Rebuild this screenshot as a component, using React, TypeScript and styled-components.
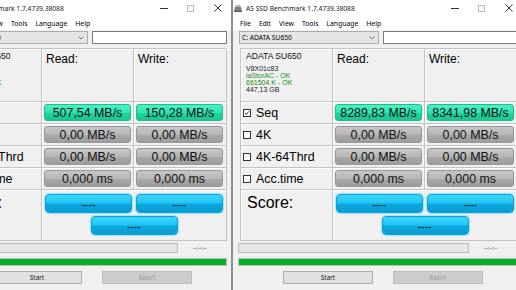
import React from 'react';
import styled, { createGlobalStyle } from 'styled-components';

const GlobalStyle = createGlobalStyle`
  html, body {
    margin: 0;
    padding: 0;
    background: #f0f0f0;
    overflow: hidden;
  }
  body {
    font-family: "Noto Sans", "Liberation Sans", sans-serif;
    color: #000;
  }
`;

const Desktop = styled.div`
  display: flex;
  width: 516px;
  height: 290px;
  overflow: hidden;
`;

const Window = styled.div<{ $shift?: number }>`
  flex: 0 0 291px;
  width: 291px;
  height: 290px;
  margin-left: ${(p) => p.$shift ?? 0}px;
  box-sizing: border-box;
  border-left: 1px solid #8e8e8e;
  border-right: 1px solid #8e8e8e;
  background: #f0f0f0;
  display: flex;
  flex-direction: column;
`;

const TitleBar = styled.div`
  height: 16px;
  background: #fff;
  display: flex;
  align-items: center;
  font-size: 6.7px;
  color: #222;
`;

const TitleIcon = styled.svg`
  width: 8px;
  height: 7px;
  margin: 0 4px 0 1px;
`;

const TitleText = styled.span`
  flex: 1;
  white-space: nowrap;
`;

const Control = styled.div`
  width: 27px;
  height: 16px;
  display: flex;
  align-items: center;
  justify-content: center;
`;

const MenuBar = styled.div`
  height: 14px;
  background: #fff;
  display: flex;
  align-items: center;
  padding-left: 3px;
  font-size: 6.8px;
`;

const MenuItem = styled.span`
  padding: 0 4px;
`;

const ComboRow = styled.div`
  display: flex;
  margin: 1px 0 0 6px;
  height: 13px;
`;

const Combo = styled.div`
  width: 140px;
  box-sizing: border-box;
  border: 1px solid #adadad;
  background: #e5e5e5;
  display: flex;
  align-items: center;
  justify-content: space-between;
  padding: 0 3px 0 2px;
  font-size: 6.7px;
`;

const TextBox = styled.div`
  width: 135px;
  margin-left: 4px;
  box-sizing: border-box;
  border: 1px solid #7a7a7a;
  background: #fff;
`;

const Panel = styled.div`
  margin: 4px 0 0 7px;
  display: grid;
  grid-template-columns: 92px 92px 93px;
  grid-template-rows: 53px 22px 22px 22px 22px 51px;
  width: 277px;
  box-sizing: border-box;
  border-top: 1px solid #c3c3c3;
  border-left: 1px solid #c3c3c3;
`;

const Cell = styled.div<{ $span?: number }>`
  box-sizing: border-box;
  border-right: 1px solid #c3c3c3;
  border-bottom: 1px solid #c3c3c3;
  box-shadow: inset 1px 1px 0 #fdfdfd;
  grid-column: span ${(p) => p.$span ?? 1};
  display: flex;
  align-items: center;
  padding: 0 2px;
`;

const InfoCell = styled(Cell)`
  flex-direction: column;
  align-items: flex-start;
  justify-content: flex-start;
  padding: 2px 0 0 5px;
`;

const DriveName = styled.div`
  font-family: "Liberation Sans", Arial, sans-serif;
  font-size: 8.6px;
  line-height: 11px;
  margin-bottom: 3px;
  color: #111;
`;

const InfoLine = styled.div<{ $ok?: boolean }>`
  font-family: "Liberation Sans", Arial, sans-serif;
  font-size: 7px;
  line-height: 7px;
  color: ${(p) => (p.$ok ? '#1d8a1d' : '#222')};
`;

const HeadCell = styled(Cell)`
  align-items: flex-start;
  padding: 3px 0 0 4px;
  font-family: "Liberation Sans", Arial, sans-serif;
  font-size: 12px;
`;

const LabelCell = styled(Cell)`
  padding-left: 2px;
  font-family: "Liberation Sans", Arial, sans-serif;
  font-size: 12.4px;
  gap: 5px;
`;

const Check = styled.span`
  width: 6px;
  height: 6px;
  border: 1px solid #333;
  background: #fff;
  display: inline-flex;
  align-items: center;
  justify-content: center;
`;

const ResultButton = styled.div<{ $tone: 'green' | 'gray' }>`
  width: 87px;
  height: 17px;
  box-sizing: border-box;
  border-radius: 3px;
  display: flex;
  align-items: center;
  justify-content: center;
  font-family: "Liberation Sans", Arial, sans-serif;
  font-size: 12.4px;
  color: #111;
  border: 1px solid ${(p) => (p.$tone === 'green' ? '#1cbd8e' : '#979797')};
  background: ${(p) =>
    p.$tone === 'green'
      ? 'linear-gradient(to bottom, #4cf0c4 0%, #2fe4b2 50%, #1dd49f 55%, #17c793 100%)'
      : 'linear-gradient(to bottom, #c6c6c6 0%, #b6b6b6 50%, #a8a8a8 55%, #9d9d9d 100%)'};
`;

const ScoreLabel = styled(Cell)`
  align-items: flex-start;
  padding: 4px 0 0 6px;
  font-family: "Liberation Sans", Arial, sans-serif;
  font-size: 16px;
`;

const ScoreCell = styled(Cell)`
  display: grid;
  grid-template-columns: 87px 87px;
  column-gap: 4px;
  row-gap: 3px;
  align-content: start;
  padding: 4px 0 0 3px;
`;

const ScoreButton = styled.div<{ $wide?: boolean }>`
  width: 87px;
  height: 19px;
  box-sizing: border-box;
  border-radius: 4px;
  border: 1px solid #0b9fd6;
  box-shadow: 0 0 1px 1px #9fe6ff;
  background: linear-gradient(to bottom, #3fd6fc 0%, #1ec6f6 48%, #0ca8de 52%, #0a9dd3 100%);
  display: flex;
  align-items: center;
  justify-content: center;
  padding-top: 3px;
  font-family: "Liberation Sans", Arial, sans-serif;
  font-size: 9px;
  font-weight: bold;
  color: #1f2d36;
  letter-spacing: 0.4px;
  ${(p) => (p.$wide ? 'grid-column: 1 / span 2; justify-self: center;' : '')}
`;

const ProgressRow = styled.div`
  display: flex;
  align-items: center;
  margin: 2px 0 0 5px;
  height: 10px;
`;

const Progress = styled.div`
  width: 231px;
  height: 10px;
  box-sizing: border-box;
  border: 1px solid #bcbcbc;
  background: #e6e6e6;
`;

const Eta = styled.span`
  margin-left: 15px;
  font-size: 6px;
  color: #444;
  letter-spacing: -0.2px;
`;

const GreenBar = styled.div`
  margin: 5px 0 0 5px;
  width: 280px;
  height: 8px;
  background: #06b025;
  border: 1px solid #bcbcbc;
  box-sizing: border-box;
`;

const ActionRow = styled.div`
  display: flex;
  gap: 20px;
  margin: 5px 0 0 50px;
`;

const ActionButton = styled.div<{ $disabled?: boolean }>`
  width: 90px;
  height: 13px;
  box-sizing: border-box;
  border: 1px solid ${(p) => (p.$disabled ? '#bfbfbf' : '#adadad')};
  background: ${(p) => (p.$disabled ? '#cccccc' : '#e1e1e1')};
  color: ${(p) => (p.$disabled ? '#9a9a9a' : '#111')};
  display: flex;
  align-items: center;
  justify-content: center;
  font-size: 6.4px;
`;

const rows = [
  { label: 'Seq', checked: true },
  { label: '4K', checked: false },
  { label: '4K-64Thrd', checked: false },
  { label: 'Acc.time', checked: false },
];

type Result = { read: string; write: string };

const WinControls = () => (
  <>
    <Control>
      <svg width="8" height="1">
        <rect width="8" height="1" fill="#333" />
      </svg>
    </Control>
    <Control>
      <svg width="7" height="7">
        <rect x="0.5" y="0.5" width="6" height="6" fill="none" stroke="#bbb" />
      </svg>
    </Control>
    <Control>
      <svg width="8" height="8">
        <path d="M0.5 0.5 L7.5 7.5 M7.5 0.5 L0.5 7.5" stroke="#222" strokeWidth="0.9" />
      </svg>
    </Control>
  </>
);

const Bench = ({ shift, results }: { shift?: number; results: Result[] }) => (
  <Window $shift={shift}>
    <TitleBar>
      <TitleIcon viewBox="0 0 8 7">
        <path d="M1 2 L7 2 L8 6 L0 6 Z" fill="#7d7d7d" />
        <path d="M2 0 L6 0 L7 2 L1 2 Z" fill="#b5b5b5" />
        <rect x="0" y="6" width="8" height="1" fill="#555" />
      </TitleIcon>
      <TitleText>AS SSD Benchmark 1.7.4739.38088</TitleText>
      <WinControls />
    </TitleBar>
    <MenuBar>
      {['File', 'Edit', 'View', 'Tools', 'Language', 'Help'].map((m) => (
        <MenuItem key={m}>{m}</MenuItem>
      ))}
    </MenuBar>
    <ComboRow>
      <Combo>
        <span>C: ADATA SU650</span>
        <svg width="6" height="4">
          <path d="M0.5 0.5 L3 3 L5.5 0.5" fill="none" stroke="#555" strokeWidth="0.8" />
        </svg>
      </Combo>
      <TextBox />
    </ComboRow>
    <Panel>
      <InfoCell>
        <DriveName>ADATA SU650</DriveName>
        <InfoLine>V8X01c83</InfoLine>
        <InfoLine $ok>iaStorAC - OK</InfoLine>
        <InfoLine $ok>661504 K - OK</InfoLine>
        <InfoLine>447,13 GB</InfoLine>
      </InfoCell>
      <HeadCell>Read:</HeadCell>
      <HeadCell>Write:</HeadCell>
      {rows.map((r, i) => (
        <React.Fragment key={r.label}>
          <LabelCell>
            <Check>
              {r.checked && (
                <svg width="6" height="6">
                  <path d="M1 3 L2.5 4.5 L5 1.2" fill="none" stroke="#222" strokeWidth="0.9" />
                </svg>
              )}
            </Check>
            {r.label}
          </LabelCell>
          <Cell>
            <ResultButton $tone={i === 0 ? 'green' : 'gray'}>{results[i].read}</ResultButton>
          </Cell>
          <Cell>
            <ResultButton $tone={i === 0 ? 'green' : 'gray'}>{results[i].write}</ResultButton>
          </Cell>
        </React.Fragment>
      ))}
      <ScoreLabel>Score:</ScoreLabel>
      <ScoreCell $span={2}>
        <ScoreButton>----</ScoreButton>
        <ScoreButton>----</ScoreButton>
        <ScoreButton $wide>----</ScoreButton>
      </ScoreCell>
    </Panel>
    <ProgressRow>
      <Progress />
      <Eta>--:--:--</Eta>
    </ProgressRow>
    <GreenBar />
    <ActionRow>
      <ActionButton>Start</ActionButton>
      <ActionButton $disabled>Abort</ActionButton>
    </ActionRow>
  </Window>
);

const empty = [
  { read: '0,00 MB/s', write: '0,00 MB/s' },
  { read: '0,00 MB/s', write: '0,00 MB/s' },
  { read: '0,000 ms', write: '0,000 ms' },
];

export default function App() {
  return (
    <>
      <GlobalStyle />
      <Desktop>
        <Bench shift={-59} results={[{ read: '507,54 MB/s', write: '150,28 MB/s' }, ...empty]} />
        <Bench results={[{ read: '8289,83 MB/s', write: '8341,98 MB/s' }, ...empty]} />
      </Desktop>
    </>
  );
}
